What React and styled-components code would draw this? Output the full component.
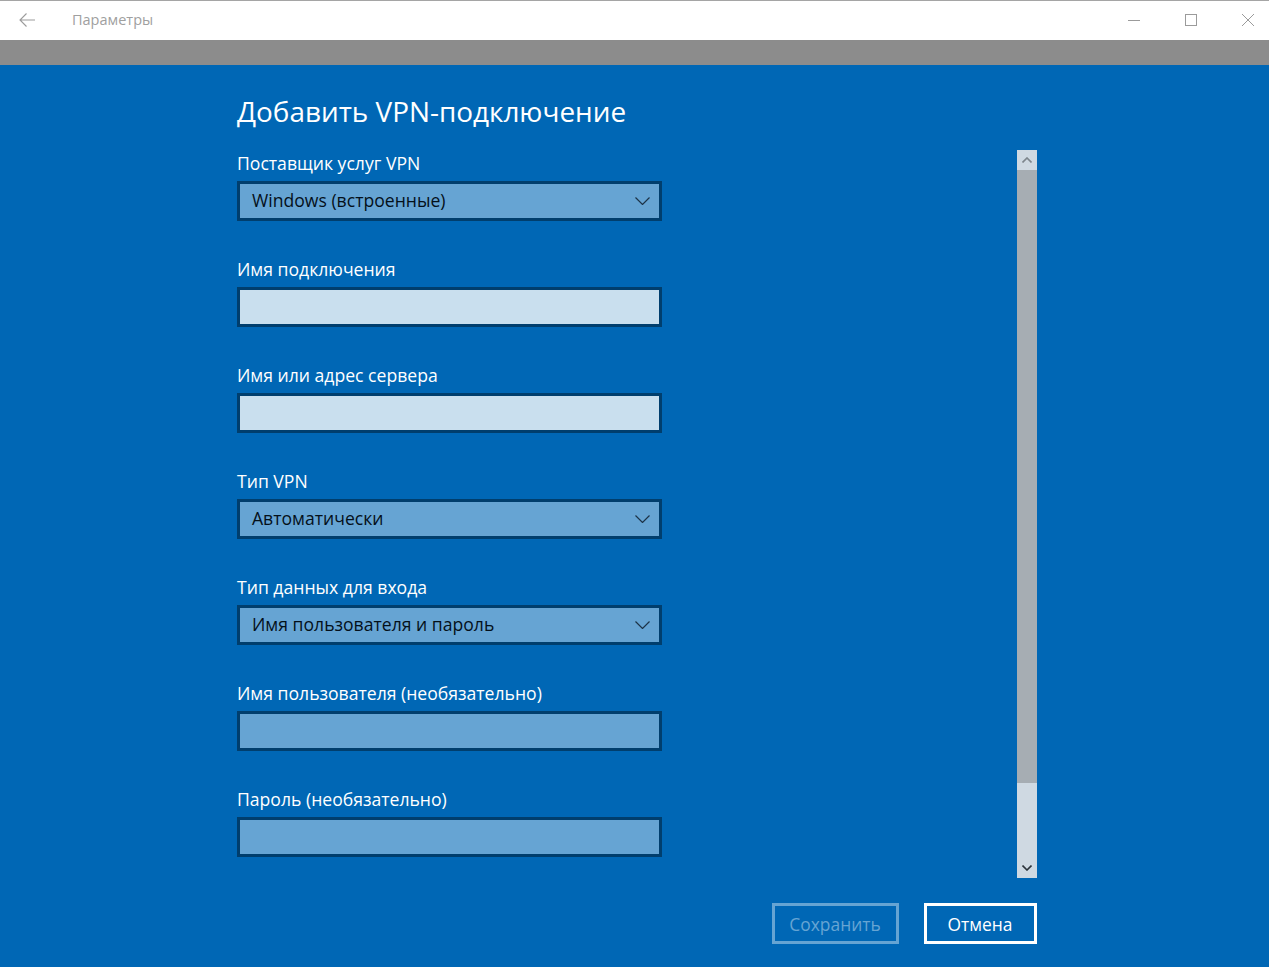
import React from "react";
import styled, { createGlobalStyle } from 'styled-components';

const GlobalStyle = createGlobalStyle`
  html, body {
    margin: 0;
    padding: 0;
    height: 100%;
    overflow: hidden;
    background: #0067b5;
    font-family: "Open Sans", "Noto Sans", "Liberation Sans", sans-serif;
  }
  * { box-sizing: border-box; }
`

const Page = styled.div`
  display: flex;
  flex-direction: column;
  height: 967px;
`

const TitleBar = styled.header`
  display: flex;
  align-items: center;
  height: 40px;
  flex: none;
  background: #fff;
  border-top: 1px solid #a5a5a5;
  color: #9b9b9b;
`

const BackButton = styled.div`
  display: flex;
  width: 72px;
  padding: 0 0 1px 19px;
`

const AppName = styled.span`
  flex: 1;
  padding-bottom: 2px;
  font-size: 14.5px;
  color: #a0a0a0;
`

const WindowButton = styled.div`
  display: flex;
  justify-content: center;
  width: 42px;
  margin-left: 15px;
  padding-bottom: 1px;
`

const Band = styled.div`
  height: 25px;
  flex: none;
  background: #8c8c8c;
`

const Main = styled.main`
  flex: 1;
  display: flex;
  flex-direction: column;
  width: 1037px;
  padding-left: 237px;
`

const Heading = styled.h1`
  margin: 0;
  height: 85px;
  padding-top: 26px;
  font-size: 27.9px;
  line-height: 40px;
  font-weight: 400;
  color: #fff;
`

const Body = styled.div`
  display: flex;
  justify-content: space-between;
  height: 728px;
`

const Form = styled.div`
  display: flex;
  flex-direction: column;
  gap: 20px;
  width: 425px;
`

const Field = styled.div`
  height: 86px;
`

const Label = styled.div`
  height: 31px;
  padding-top: 1px;
  font-size: 17.6px;
  line-height: 24px;
  color: #fff;
  white-space: nowrap;
`

const Box = styled.div`
  display: flex;
  align-items: center;
  justify-content: space-between;
  height: 40px;
  padding: 0 9px 2px 12px;
  border: 3px solid #003e6d;
  background: ${(props) => (props.light ? '#c9dfee' : '#66a4d3')};
  font-size: 17.6px;
  color: #04101a;
  white-space: nowrap;
`

const Scrollbar = styled.div`
  display: flex;
  flex-direction: column;
  width: 20px;
  height: 728px;
  background: #cfd9e2;
`

const ScrollButton = styled.div`
  display: flex;
  align-items: center;
  justify-content: center;
  height: 20px;
  flex: none;
`

const Thumb = styled.div`
  height: 613px;
  flex: none;
  background: #a6adb3;
`

const Spacer = styled.div`
  flex: 1;
`

const Footer = styled.footer`
  display: flex;
  justify-content: flex-end;
  gap: 25px;
  margin-top: 25px;
`

const Button = styled.div`
  display: flex;
  align-items: center;
  justify-content: center;
  width: ${(props) => props.w}px;
  height: 41px;
  padding-right: 1px;
  border: 3px solid ${(props) => (props.disabled ? '#66a4d3' : '#fff')};
  font-size: 17.4px;
  color: ${(props) => (props.disabled ? '#66a4d3' : '#fff')};
`

const SelectChevron = () => (
  <svg width="15" height="8" viewBox="0 0 15 8" fill="none" style={{ marginTop: 2 }}>
    <path d="M0.5 0.5 L7.5 7.5 L14.5 0.5" stroke="#1d3347" strokeWidth="1.2" />
  </svg>
)

const ScrollChevron = ({ color, up }) => (
  <svg width="10" height="6" viewBox="0 0 10 6" fill="none">
    <path d={up ? 'M0.5 5.5 L5 1 L9.5 5.5' : 'M0.5 0.5 L5 5 L9.5 0.5'} stroke={color} strokeWidth="1.6" />
  </svg>
)

const fields = [
  { label: 'Поставщик услуг VPN', value: 'Windows (встроенные)', select: true },
  { label: 'Имя подключения', light: true },
  { label: 'Имя или адрес сервера', light: true },
  { label: 'Тип VPN', value: 'Автоматически', select: true },
  { label: 'Тип данных для входа', value: 'Имя пользователя и пароль', select: true },
  { label: 'Имя пользователя (необязательно)' },
  { label: 'Пароль (необязательно)' },
]

export default function App() {
  return (
    <Page>
      <GlobalStyle />
      <TitleBar>
        <BackButton>
          <svg width="16" height="14" viewBox="0 0 16 14" fill="none" stroke="#9b9b9b" strokeWidth="1.1">
            <path d="M1 7 H16 M7.5 0.5 L1 7 L7.5 13.5" />
          </svg>
        </BackButton>
        <AppName>Параметры</AppName>
        <WindowButton>
          <svg width="12" height="12" viewBox="0 0 12 12" stroke="#9b9b9b" fill="none"><path d="M0 6.5 H12" /></svg>
        </WindowButton>
        <WindowButton>
          <svg width="12" height="12" viewBox="0 0 12 12" stroke="#9b9b9b" fill="none"><rect x="0.5" y="0.5" width="11" height="11" /></svg>
        </WindowButton>
        <WindowButton>
          <svg width="12" height="12" viewBox="0 0 12 12" stroke="#9b9b9b" fill="none"><path d="M0 0 L12 12 M12 0 L0 12" /></svg>
        </WindowButton>
      </TitleBar>
      <Band />
      <Main>
        <Heading>Добавить VPN-подключение</Heading>
        <Body>
          <Form>
            {fields.map((f) => (
              <Field key={f.label}>
                <Label>{f.label}</Label>
                <Box light={f.light}>
                  <span>{f.value}</span>
                  {f.select && <SelectChevron />}
                </Box>
              </Field>
            ))}
          </Form>
          <Scrollbar>
            <ScrollButton><ScrollChevron up color="#7d858c" /></ScrollButton>
            <Thumb />
            <Spacer />
            <ScrollButton><ScrollChevron color="#2c343b" /></ScrollButton>
          </Scrollbar>
        </Body>
        <Footer>
          <Button disabled w={127}>Сохранить</Button>
          <Button w={113}>Отмена</Button>
        </Footer>
      </Main>
    </Page>
  );
}
